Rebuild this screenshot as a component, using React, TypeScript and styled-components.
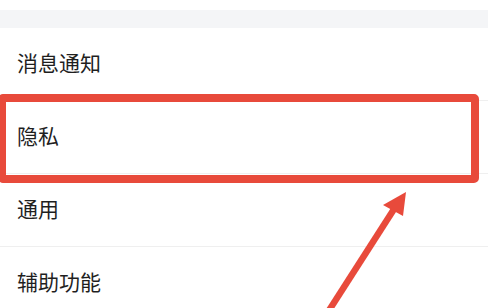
import React from "react";
import styled, { createGlobalStyle } from "styled-components";

const GlobalStyle = createGlobalStyle`
  html, body {
    margin: 0;
    padding: 0;
    background: #ffffff;
  }
  body {
    font-family: "Noto Sans CJK SC", "Noto Sans", sans-serif;
  }
`;

const Screen = styled.div`
  position: relative;
  width: 488px;
  height: 308px;
  overflow: hidden;
  background: #ffffff;
`;

const TopSpace = styled.div`
  height: 10px;
  background: #ffffff;
`;

const GroupGap = styled.div`
  height: 18px;
  background: #f4f5f7;
`;

const List = styled.div`
  display: flex;
  flex-direction: column;
`;

const Row = styled.div`
  height: 73px;
  box-sizing: border-box;
  display: flex;
  align-items: center;
  padding: 0 0 5px 17px;
  font-size: 21px;
  color: #1f1f1f;
  border-bottom: 1px solid #efefef;
`;

// red annotation box over the "隐私" row
const Highlight = styled.div`
  position: absolute;
  left: -2px;
  top: 94px;
  width: 481px;
  height: 89px;
  box-sizing: border-box;
  border: 8px solid #e84a3b;
  border-radius: 5px;
`;

const Arrow = styled.svg`
  position: absolute;
  left: 0;
  top: 0;
`;

const items = ["消息通知", "隐私", "通用", "辅助功能"];

export default function App() {
  return (
    <Screen>
      <GlobalStyle />
      <TopSpace />
      <GroupGap />
      <List>
        {items.map((label) => (
          <Row key={label}>{label}</Row>
        ))}
      </List>
      <Highlight />
      <Arrow width="488" height="308" viewBox="0 0 488 308">
        <line x1="328" y1="312" x2="396" y2="206" stroke="#e84a3b" strokeWidth="6.5" />
        <polygon points="406,192 383,205 403,216" fill="#e84a3b" />
      </Arrow>
    </Screen>
  );
}
